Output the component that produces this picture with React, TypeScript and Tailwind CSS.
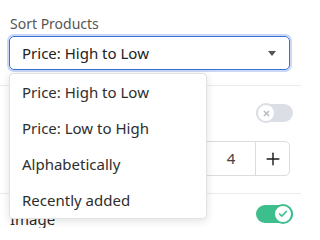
import { Check, Minus, Plus, X } from 'lucide-react';

const font = { fontFamily: '"Noto Sans", "Liberation Sans", sans-serif' };

const options = ['Price: High to Low', 'Price: Low to High', 'Alphabetically', 'Recently added'];

function Toggle({ on }: { on: boolean }) {
  return (
    <div
      className={`relative w-[37px] h-[18px] rounded-full ${on ? 'bg-[#3dbf8d]' : 'bg-[#dcdee6]'}`}
    >
      <div
        className={`absolute top-[-1px] w-[20px] h-[20px] rounded-full bg-white flex items-center justify-center ${
          on ? 'right-[0px] border-2 border-[#3dbf8d]' : 'left-[0px] border-2 border-[#dcdee6]'
        }`}
      >
        {on ? (
          <Check className="w-[10px] h-[10px] text-[#3dbf8d]" strokeWidth={4} />
        ) : (
          <X className="w-[9px] h-[9px] text-[#b8bcc6]" strokeWidth={4} />
        )}
      </div>
    </div>
  );
}

export default function App() {
  return (
    <div className="relative w-[301px] h-[228px] overflow-hidden bg-white text-[#2a2a2a]" style={font}>
      {/* sort section */}
      <div className="px-[9px] pt-[14px] pb-[15px] border-b border-[#ebebeb]">
        <div className="text-[14px] leading-[20px] text-[#555] pl-[1px]">Sort Products</div>
        <div className="mt-[2px] h-[34px] w-[281px] rounded-[5px] border border-[#3b6fd6] ring-2 ring-[#c9d8f7] flex items-center justify-between pl-[12px] pr-[13px]">
          <span className="text-[15px] text-[#222]">Price: High to Low</span>
          <span className="w-0 h-0 border-l-[4px] border-r-[4px] border-t-[5px] border-l-transparent border-r-transparent border-t-[#555]" />
        </div>
      </div>

      {/* options section (labels sit under the open menu) */}
      <div className="pl-[10px] pr-[8px] pt-[10px] pb-[17px] border-b border-[#ebebeb]">
        <div className="h-[34px] flex items-center justify-end">
          <Toggle on={false} />
        </div>
        <div className="mt-[11px] flex items-center justify-end pr-[3px]">
          <div className="h-[35px] flex rounded-[5px] border border-[#dcdcdc]">
            <div className="w-[34px] flex items-center justify-center border-r border-[#dcdcdc]">
              <Minus className="w-[16px] h-[16px]" strokeWidth={2} />
            </div>
            <div className="w-[48px] flex items-center justify-center text-[15px] text-[#444]">4</div>
            <div className="w-[34px] flex items-center justify-center border-l border-[#dcdcdc]">
              <Plus className="w-[20px] h-[20px] text-[#1a1a1a]" strokeWidth={1.7} />
            </div>
          </div>
        </div>
      </div>

      {/* image row */}
      <div className="pl-[10px] pr-[8px] pt-[11px] flex items-start justify-between">
        <span className="text-[15px] leading-[20px] mt-[4px]">Image</span>
        <Toggle on />
      </div>

      {/* open dropdown */}
      <div className="absolute left-[9px] top-[73px] w-[198px] rounded-[4px] bg-white border border-[#e2e2e2] shadow-[0_2px_8px_rgba(0,0,0,0.12)]">
        {options.map((o) => (
          <div key={o} className="h-[36px] flex items-center px-[12px] text-[15px] text-[#2e2e2e]">
            {o}
          </div>
        ))}
      </div>
    </div>
  );
}
